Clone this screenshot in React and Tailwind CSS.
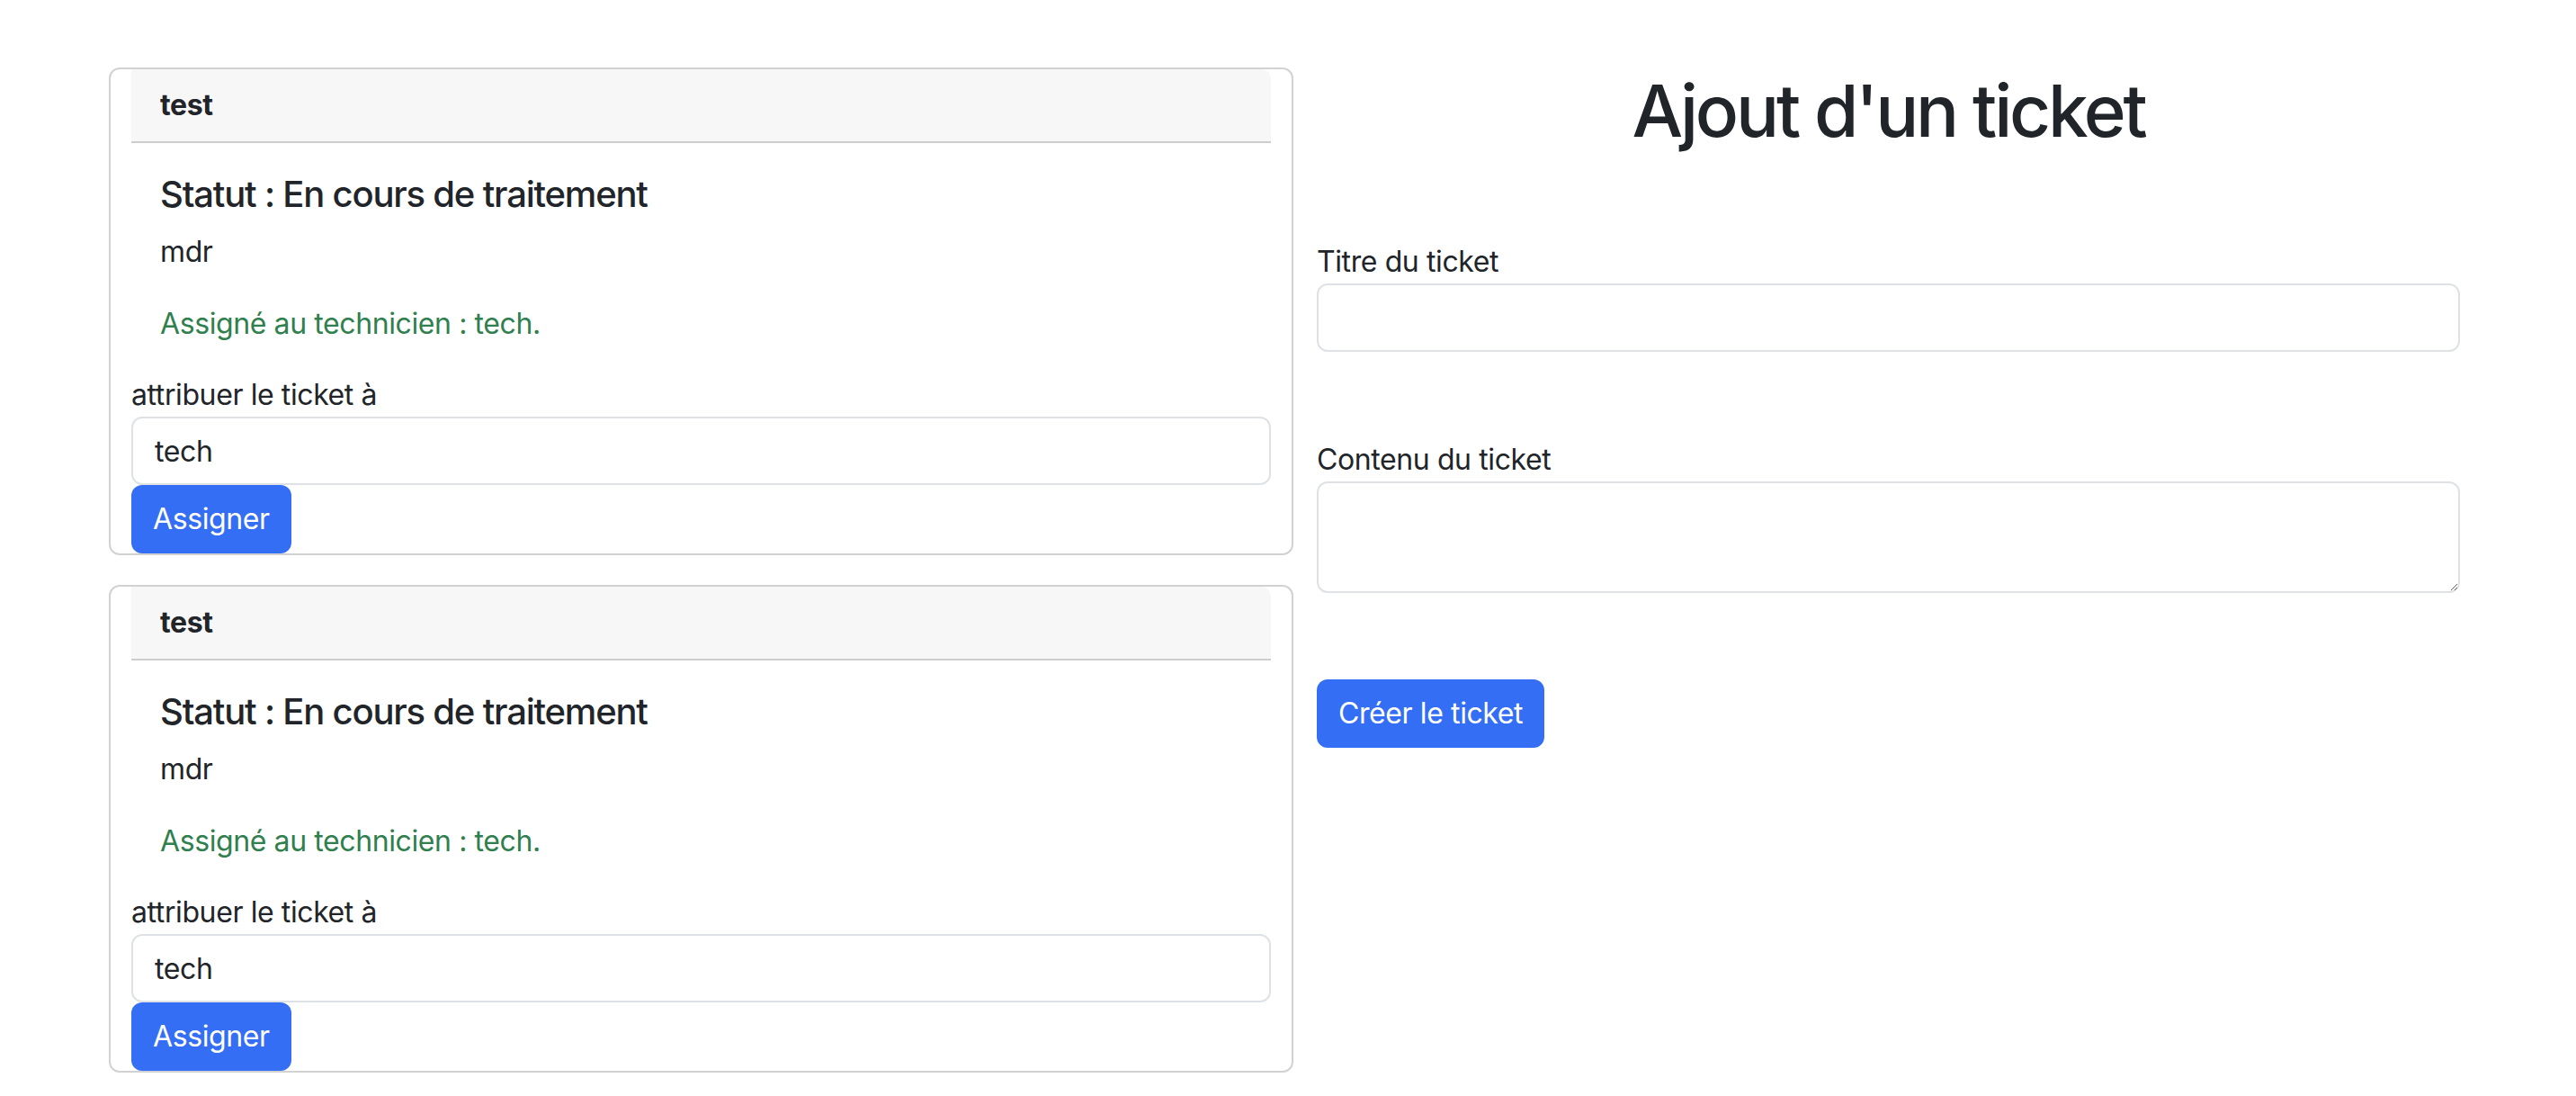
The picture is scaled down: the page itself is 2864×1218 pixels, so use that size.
import { useState } from 'react';

const tickets = [
    { id: 1, title: 'test', status: 'En cours de traitement', content: 'mdr', tech: 'tech' },
    { id: 2, title: 'test', status: 'En cours de traitement', content: 'mdr', tech: 'tech' },
];

function TicketCard({ ticket }) {
    const [tech, setTech] = useState(ticket.tech);

    return (
        <div className="border-2 border-[#d2d2d2] rounded-[12px] px-[23px] flex flex-col">
            <div className="bg-[#f7f7f7] border-b-2 border-[#cdcdcd] rounded-tr-[10px] px-[32px] py-[16px] text-[32px] leading-[48px] font-bold tracking-[-0.4px]">
                {ticket.title}
            </div>
            <div className="p-[32px] pb-[31px]">
                <h5 className="text-[40px] leading-[48px] font-medium tracking-[-1.2px] mb-[16px] pt-[1px]">Statut : {ticket.status}</h5>
                <p className="text-[32px] leading-[48px] tracking-[-0.4px] mb-[32px]">{ticket.content}</p>
                <p className="text-[32px] leading-[48px] tracking-[-0.4px] text-[#307f4e]">Assigné au technicien : {ticket.tech}.</p>
            </div>
            <label className="text-[32px] leading-[48px] tracking-[-0.4px]">attribuer le ticket à</label>
            <input
                className="h-[76px] w-full border-2 border-[#dee2e6] rounded-[12px] px-[24px] text-[32px] tracking-[-0.4px] outline-none"
                value={tech}
                onChange={(e) => setTech(e.target.value)}
            />
            <button className="self-start h-[76px] px-[24px] bg-[#346ef5] rounded-[12px] text-white text-[32px] tracking-[-0.4px]">
                Assigner
            </button>
        </div>
    );
}

export default function App() {
    const [title, setTitle] = useState('');
    const [content, setContent] = useState('');

    return (
        <div className="min-h-screen bg-white text-[#212529] font-['Inter','Liberation_Sans',sans-serif] flex gap-[26px] pl-[121px] pt-[75px]">
            <div className="w-[1317px] flex flex-col gap-[33px]">
                {tickets.map((t) => (
                    <TicketCard key={t.id} ticket={t} />
                ))}
            </div>

            <div className="w-[1271px] flex flex-col">
                <h1 className="text-[80px] leading-[96px] font-medium tracking-[-3.2px] text-center mb-[96px]">Ajout d'un ticket</h1>

                <label className="text-[32px] leading-[48px] tracking-[-0.4px]">Titre du ticket</label>
                <input
                    className="h-[76px] w-full border-2 border-[#dee2e6] rounded-[12px] px-[24px] text-[32px] outline-none mb-[96px]"
                    value={title}
                    onChange={(e) => setTitle(e.target.value)}
                />

                <label className="text-[32px] leading-[48px] tracking-[-0.4px]">Contenu du ticket</label>
                <textarea
                    className="h-[124px] w-full border-2 border-[#dee2e6] rounded-[12px] px-[24px] py-[12px] text-[32px] outline-none resize-y mb-[96px]"
                    value={content}
                    onChange={(e) => setContent(e.target.value)}
                />

                <button className="self-start h-[76px] px-[24px] bg-[#346ef5] rounded-[12px] text-white text-[32px] tracking-[-0.4px]">
                    Créer le ticket
                </button>
            </div>
        </div>
    );
}
